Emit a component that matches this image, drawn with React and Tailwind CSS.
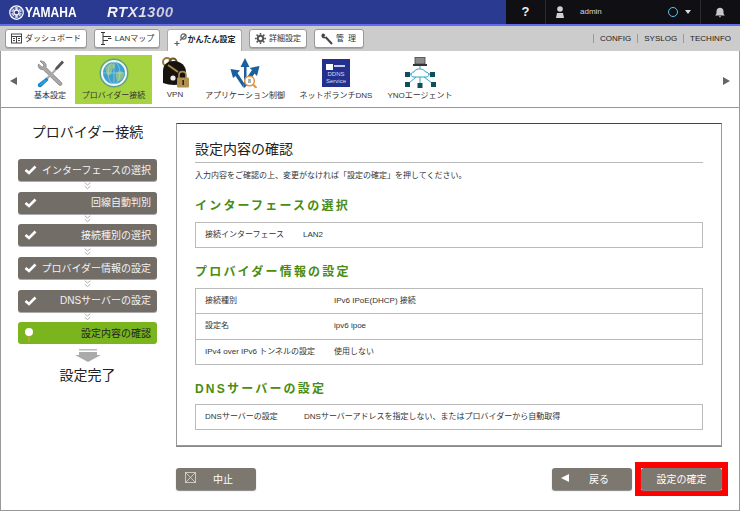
import React from "react";

const F = { fontFamily: '"Liberation Sans","Noto Sans CJK JP",sans-serif' };

function Emblem() {
  return (
    <svg width="15" height="15" viewBox="0 0 30 30" className="shrink-0">
      <circle cx="15" cy="15" r="13.5" fill="none" stroke="#fff" strokeWidth="2.5" />
      <circle cx="15" cy="15" r="4.5" fill="none" stroke="#fff" strokeWidth="2" />
      {[0, 60, 120, 180, 240, 300].map((a) => (
        <g key={a} transform={`rotate(${a} 15 15)`}>
          <path d="M15 11 V4 M12.5 4 V8 Q12.5 10 15 10 Q17.5 10 17.5 8 V4" fill="none" stroke="#fff" strokeWidth="1.6" />
        </g>
      ))}
    </svg>
  );
}

function TabIcon({ kind }) {
  if (kind === "dash")
    return (
      <svg width="11" height="11" viewBox="0 0 11 11" fill="none" stroke="#444" strokeWidth="1">
        <rect x="0.5" y="1" width="10" height="9" />
        <path d="M0.5 3.5H10.5M5.5 3.5V10M2 5.5H4M2 7.5H4M7 5.5H9M7 7.5H9" />
      </svg>
    );
  if (kind === "lan")
    return (
      <svg width="12" height="13" viewBox="0 0 12 13" fill="none" stroke="#333" strokeWidth="1">
        <path d="M1 0.5H5M3 0.5V12M1 12.5H5M3 4.5H11M3 8.5H8M8 6.5H11.5" />
      </svg>
    );
  if (kind === "easy")
    return (
      <svg width="13" height="14" viewBox="0 0 13 14" fill="none">
        <path d="M12 1.5 6 7.5" stroke="#777" strokeWidth="1.6" />
        <circle cx="9.5" cy="3.5" r="2.6" stroke="#666" strokeWidth="1.2" />
        <path d="M3 8V13M0.5 10.5H5.5" stroke="#555" strokeWidth="1.1" />
      </svg>
    );
  if (kind === "gear")
    return (
      <svg width="11" height="11" viewBox="0 0 11 11">
        <circle cx="5.5" cy="5.5" r="2.7" fill="none" stroke="#555" strokeWidth="2" />
        <path d="M5.5 0V11M0 5.5H11M1.6 1.6 9.4 9.4M9.4 1.6 1.6 9.4" stroke="#555" strokeWidth="1.5" strokeDasharray="1.8 7.4 1.8" />
      </svg>
    );
  return (
    <svg width="12" height="12" viewBox="0 0 12 12" fill="none">
      <path d="M11 11 4.5 4" stroke="#444" strokeWidth="2" />
      <path d="M1 1.5 3 3.5 4.5 2 2.5 .5C.5 .5 0 2.5 .8 4.3 2 5.8 4 5.6 5 4.8" fill="#444" />
    </svg>
  );
}

function Tab({ kind, label, w, active, bold }) {
  if (active)
    return (
      <div className="flex h-[22px] w-[75px] self-end items-center justify-center gap-[1px] rounded-t-[3px] border border-b-0 border-[#aaa] bg-white pb-[2px] text-[8px] font-bold text-[#222]">
        <TabIcon kind={kind} />
        <span>{label}</span>
      </div>
    );
  return (
    <div
      className={`flex h-[19px] items-center justify-center gap-[3px] rounded-[3px] border border-[#999] bg-white text-[8px] text-[#333] shadow-[0_1px_0_#aaa] ${w}`}
    >
      <TabIcon kind={kind} />
      <span className={bold ? "tracking-[1px]" : ""}>{label}</span>
    </div>
  );
}

function Tools() {
  return (
    <svg width="30" height="30" viewBox="0 0 30 30">
      <path d="M5 3 9 7 7.5 9.5 3.5 6C2.5 9 4.5 12 8 11.5L24 27C25.5 28.5 28 26.5 26.5 24.5L11 9.5C12 5.5 9 2.5 5 3Z" fill="#a9a9a9" stroke="#666" strokeWidth=".6" />
      <path d="M27 2.5 29 4.5 23 11 20.5 12.5 19.5 11.5 21 9Z" fill="#555" />
      <path d="M20 11 21.5 12.5 11 23 9.5 21.5Z" fill="#aaa" />
      <path d="M11.5 19.5 13.5 22 6 29C4 30 2 28 3 26Z" fill="#1b7fc0" />
      <path d="M10 21 12 23 5 28 4 27Z" fill="#2e9ddc" />
    </svg>
  );
}

function Globe() {
  return (
    <svg width="30" height="30" viewBox="0 0 30 30">
      <circle cx="15" cy="15" r="14.5" fill="#5f9f8f" />
      <circle cx="15" cy="15" r="13" fill="#f2f6ee" />
      <circle cx="15" cy="15" r="11" fill="#3f9fce" />
      <path d="M7 9C10 5 15 5 16 7 17 10 13 10 13 13 13 16 9 20 8 16 7.5 13 5.5 12 7 9ZM18 14C21 12 25 14 25 17 24 21 20 24 18 23 17 20 16 16 18 14Z" fill="#8cc08a" />
      <path d="M15 4V26M4 15H26" stroke="#bfe0ea" strokeWidth=".5" />
      <ellipse cx="15" cy="15" rx="6" ry="11" fill="none" stroke="#bfe0ea" strokeWidth=".5" />
    </svg>
  );
}

function Vpn() {
  return (
    <svg width="30" height="32" viewBox="0 0 30 32">
      <circle cx="7" cy="5" r="4" fill="none" stroke="#9a7b3c" strokeWidth="2" />
      <circle cx="13" cy="5" r="3.5" fill="none" stroke="#6e5527" strokeWidth="2" />
      <path d="M3 26V14C3 7 8 4 14 4 21 4 26 9 26 15V26Q14 30 3 26Z" fill="#17130f" />
      <path d="M8 8 18 15" stroke="#a98a46" strokeWidth="2" />
      <circle cx="13" cy="21" r="2.6" fill="#eee" />
      <path d="M19 21V18C19 13.5 26 13.5 26 18V21" fill="none" stroke="#a88a4c" strokeWidth="1.6" />
      <rect x="17" y="20.5" width="12" height="10" rx="1" fill="#b0904e" />
      <rect x="22.4" y="23" width="1.6" height="5" fill="#33240f" />
    </svg>
  );
}

function Apps() {
  return (
    <svg width="30" height="30" viewBox="0 0 30 30">
      <path d="M14 30V9H10.5L15 0 19.5 9H16.5V20L22 12 19.5 10 29.5 8 27 18 24.5 15.5 16.5 28Z" fill="#1a5f9e" />
      <path d="M13.5 30 5.5 18 3 20 0.5 11 10 12.5 7.5 15 14 25Z" fill="#1a5f9e" />
      <circle cx="19.5" cy="23" r="4.8" fill="#fff" stroke="#e8923a" strokeWidth="1.5" />
      <rect x="18" y="21" width="3" height="4" fill="#9db4c8" />
      <path d="M23 26.5 26.5 30" stroke="#e8923a" strokeWidth="2" />
    </svg>
  );
}

function Yno() {
  const n = ["M1 15", "M26 15", "M1 25", "M13.5 26", "M27 25"];
  return (
    <svg width="32" height="32" viewBox="0 0 32 32">
      <rect x="11" y="0.5" width="10" height="6.5" fill="#8c8a8c" stroke="#444" strokeWidth=".8" />
      <rect x="9" y="7" width="14" height="2" fill="#333" />
      <path d="M16 9V12M10 20C6 20 6 15 10 15 11 11 20 11 21.5 15 26 15 26 20 22 20Z" fill="none" stroke="#2fa6d0" strokeWidth="1" />
      <path d="M5 17H8M24 17H27M5 26 12 20M16 20V27M28 26 20 20" stroke="#2fa6d0" strokeWidth="1" fill="none" />
      {n.map((d, i) => (
        <path key={i} d={`${d}h5v5h-5z`} fill="#0f4f5c" />
      ))}
    </svg>
  );
}

function Ddns() {
  return (
    <div className="flex h-[28px] w-[28px] flex-col items-center justify-end bg-[#24308e] pb-[2px] text-center text-[6px] leading-[7px] text-[#d7dcf2]">
      <div className="mb-[1px] flex w-full items-start gap-[1px] pl-[4px]">
        <span className="h-[6px] w-[7px] bg-white"></span>
        <span className="mt-[1px] h-[2px] w-[11px] bg-[#c8cdef]"></span>
      </div>
      <span>DDNS</span>
      <span>Service</span>
    </div>
  );
}

function NavItem({ icon, label, w, active, lower }) {
  return (
    <div className={`flex h-[49px] flex-col items-center ${w} ${active ? "bg-[#a5d440]" : ""}`}>
      <div className={`flex w-full items-center justify-center ${lower ? "h-[35px]" : "h-[36px]"}`}>{icon}</div>
      <span className="whitespace-nowrap text-[8px] leading-[9px] text-[#333]">{label}</span>
    </div>
  );
}

function Check() {
  return (
    <svg width="13" height="10" viewBox="0 0 13 10" className="shrink-0">
      <path d="M1.5 5 5 8 11.5 1.5" fill="none" stroke="#fff" strokeWidth="2.6" />
    </svg>
  );
}

function Chev() {
  return (
    <div className="flex h-[10.7px] items-center justify-center">
      <svg width="7" height="8" viewBox="0 0 7 8" fill="none" stroke="#999" strokeWidth=".8">
        <path d="M.7 .7 3.5 3 6.3 .7M.7 4.2 3.5 6.6 6.3 4.2" />
      </svg>
    </div>
  );
}

function Step({ label }) {
  return (
    <div className="flex h-[22px] items-center justify-between rounded-[3px] bg-[#736d68] pl-[6px] pr-[6px] text-[10px] text-[#f2f2f2] shadow-[0_1px_0_#aaa]">
      <Check />
      <span className="whitespace-nowrap">{label}</span>
    </div>
  );
}

function Row({ k, v, kw, last }) {
  return (
    <div className={`flex flex-1 items-center pl-[9px] ${last ? "" : "border-b border-[#bbb]"}`}>
      <span className={`${kw} shrink-0`}>{k}</span>
      <span>{v}</span>
    </div>
  );
}

function Heading({ children, cls }) {
  return <h2 className={`text-[12px] font-bold leading-[16px] tracking-[2.2px] text-[#4a8c12] ${cls}`}>{children}</h2>;
}

function Btn({ icon, label, w }) {
  return (
    <div className={`relative flex h-[22px] items-center justify-center rounded-[3px] bg-[#7d786f] pl-[14px] text-[10px] text-white shadow-[0_1px_1px_#888] ${w}`}>
      {icon}
      <span>{label}</span>
    </div>
  );
}

export default function App() {
  return (
    <div style={F} className="flex h-[511px] w-[740px] flex-col overflow-hidden bg-white text-[#333]">
      <header className="flex h-[26px] shrink-0 border-b-2 border-[#5f6cec]">
        <div className="flex flex-1 items-center bg-[#2a3a90] pl-[9px]">
          <Emblem />
          <span className="ml-[1px] w-[50px] origin-left scale-x-[0.8] text-[15px] font-bold text-white">YAMAHA</span>
          <span className="ml-[32px] bg-linear-to-r from-white to-[#c4c4d4] bg-clip-text text-[15px] font-bold italic tracking-[0.5px] text-transparent">RTX1300</span>
        </div>
        <div className="flex w-[234px] items-center bg-[#101014] text-[#d4d4d4]">
          <div className="flex h-full w-[40px] items-center justify-center border-r border-[#2c2c2c] text-[13px] font-bold text-[#eee]">?</div>
          <div className="flex items-center pl-[9px]">
            <svg width="10" height="12" viewBox="0 0 10 12" fill="#d0d0d0">
              <circle cx="5" cy="3" r="2.8" />
              <path d="M1 12 2 7H8L9 12Z" />
            </svg>
            <span className="ml-[15px] text-[8px]">admin</span>
          </div>
          <span className="ml-[66px] h-[10px] w-[10px] rounded-full border-[1.5px] border-[#5cc3f5]"></span>
          <span className="ml-[7px] h-0 w-0 border-x-[3.5px] border-t-[4px] border-x-transparent border-t-[#ddd]"></span>
          <div className="ml-[9px] flex h-full flex-1 items-center justify-center border-l border-[#2c2c2c]">
            <svg width="10" height="11" viewBox="0 0 10 11" fill="#c8c8c8">
              <path d="M0 8.5C1.5 7.5 1.5 6 1.5 4.5 1.5 2 3 .8 5 .8S8.5 2 8.5 4.5C8.5 6 8.5 7.5 10 8.5ZM3.8 9.3H6.2L5 10.8Z" />
            </svg>
          </div>
        </div>
      </header>

      <nav className="flex h-[25px] shrink-0 items-center gap-[7px] bg-[#cccccc] pl-[5px] pr-[9px]">
        <Tab kind="dash" label="ダッシュボード" w="w-[82px]" />
        <Tab kind="lan" label="LANマップ" w="w-[66px]" />
        <Tab kind="easy" label="かんたん設定" active />
        <Tab kind="gear" label="詳細設定" w="w-[58px]" />
        <Tab kind="wrench" label="管 理" w="w-[50px]" bold />
        <div className="ml-auto flex items-center text-[8px] text-[#222]">
          {["CONFIG", "SYSLOG", "TECHINFO"].map((t) => (
            <span key={t} className="ml-[6px] border-l border-[#999] pl-[6px] leading-[9px]">{t}</span>
          ))}
        </div>
      </nav>

      <section className="flex h-[57px] shrink-0 items-start border-x border-b border-[#999] pt-[4px]">
        <span className="ml-[9px] h-0 w-0 self-center border-y-[4px] border-r-[7px] border-y-transparent border-r-[#666]"></span>
        <div className="ml-[8px] flex items-center">
          <NavItem icon={<Tools />} label="基本設定" w="w-[50px]" />
          <NavItem icon={<Globe />} label="プロバイダー接続" w="w-[77px]" active />
          <NavItem icon={<Vpn />} label="VPN" w="w-[46px]" lower />
          <NavItem icon={<Apps />} label="アプリケーション制御" w="w-[94px]" />
          <NavItem icon={<Ddns />} label="ネットボランチDNS" w="w-[88px]" />
          <NavItem icon={<Yno />} label="YNOエージェント" w="w-[80px]" />
        </div>
        <span className="ml-auto mr-[9px] h-0 w-0 self-center border-y-[4px] border-l-[7px] border-y-transparent border-l-[#666]"></span>
      </section>

      <main className="flex flex-1 border-x border-b border-[#999] pt-[15px]">
        <aside className="ml-[17px] w-[139px] shrink-0">
          <h1 className="h-[36px] text-center text-[14px] leading-[18px] font-normal text-[#222]">プロバイダー接続</h1>
          <Step label="インターフェースの選択" />
          <Chev />
          <Step label="回線自動判別" />
          <Chev />
          <Step label="接続種別の選択" />
          <Chev />
          <Step label="プロバイダー情報の設定" />
          <Chev />
          <Step label="DNSサーバーの設定" />
          <Chev />
          <div className="flex h-[22px] items-center justify-between rounded-[3px] bg-[#7ab51d] px-[6px] text-[10px] text-[#222]">
            <svg width="10" height="15" viewBox="0 0 10 15" className="mt-[2px]">
              <path d="M5 8V15" stroke="#c9a04e" strokeWidth="1.5" />
              <circle cx="5" cy="5" r="4" fill="#fff" />
            </svg>
            <span>設定内容の確認</span>
          </div>
          <div className="mt-[5px] flex justify-center">
            <svg width="26" height="13" viewBox="0 0 26 13">
              <rect x="4" y="0" width="18" height="1.5" fill="#bbb" />
              <rect x="4" y="3" width="18" height="3" fill="#aaa" />
              <path d="M0 6H26L13 13Z" fill="#aaa" />
            </svg>
          </div>
          <p className="mt-[4px] text-center text-[14px] leading-[18px] text-[#222]">設定完了</p>
        </aside>

        <div className="ml-[19px] flex w-[546px] shrink-0 flex-col">
          <div className="h-[323px] border border-[#999] border-t-[#444] px-[18px] pt-[15px] shadow-[0_1px_0_#888]">
            <h1 className="border-b border-[#bbb] pb-[3px] text-[14px] font-normal leading-[20px] text-[#222]">設定内容の確認</h1>
            <p className="mt-[7px] text-[8px] leading-[11px] text-[#333]">入力内容をご確認の上、変更がなければ「設定の確定」を押してください。</p>
            <Heading cls="mt-[17px]">インターフェースの選択</Heading>
            <div className="mt-[8px] flex h-[26px] border border-[#bbb] text-[8px]">
              <Row k="接続インターフェース" v="LAN2" kw="w-[98px]" last />
            </div>
            <Heading cls="mt-[16px]">プロバイダー情報の設定</Heading>
            <div className="mt-[8px] flex h-[77px] flex-col border border-[#bbb] text-[8px]">
              <Row k="接続種別" v="IPv6 IPoE(DHCP) 接続" kw="w-[129px]" />
              <Row k="設定名" v="ipv6 ipoe" kw="w-[129px]" />
              <Row k="IPv4 over IPv6 トンネルの設定" v="使用しない" kw="w-[129px]" last />
            </div>
            <Heading cls="mt-[16px]">DNSサーバーの設定</Heading>
            <div className="mt-[7px] flex h-[26px] border border-[#bbb] text-[8px]">
              <Row k="DNSサーバーの設定" v="DNSサーバーアドレスを指定しない、またはプロバイダーから自動取得" kw="w-[99px]" last />
            </div>
          </div>

          <div className="mt-[16px] flex items-center">
            <Btn
              w="w-[80px]"
              label="中止"
              icon={
                <svg width="11" height="11" viewBox="0 0 11 11" fill="none" stroke="#ddd" strokeWidth=".8" className="absolute left-[9px] top-[4px]">
                  <rect x=".5" y=".5" width="10" height="10" />
                  <path d="M.5 .5 10.5 10.5M10.5 .5 .5 10.5" />
                </svg>
              }
            />
            <div className="ml-auto">
              <Btn
                w="w-[80px]"
                label="戻る"
                icon={<span className="absolute left-[9px] top-[6px] h-0 w-0 border-y-[4px] border-r-[8px] border-y-transparent border-r-white"></span>}
              />
            </div>
            <div className="mr-[-6px] ml-[3px] w-[93px] border-[6px] border-[#ff0000] bg-white">
              <div className="flex h-[22px] items-center justify-center rounded-[3px] bg-[#7d786f] text-[10px] text-white shadow-[0_1px_1px_#888]">設定の確定</div>
            </div>
          </div>
        </div>
      </main>
    </div>
  );
}
